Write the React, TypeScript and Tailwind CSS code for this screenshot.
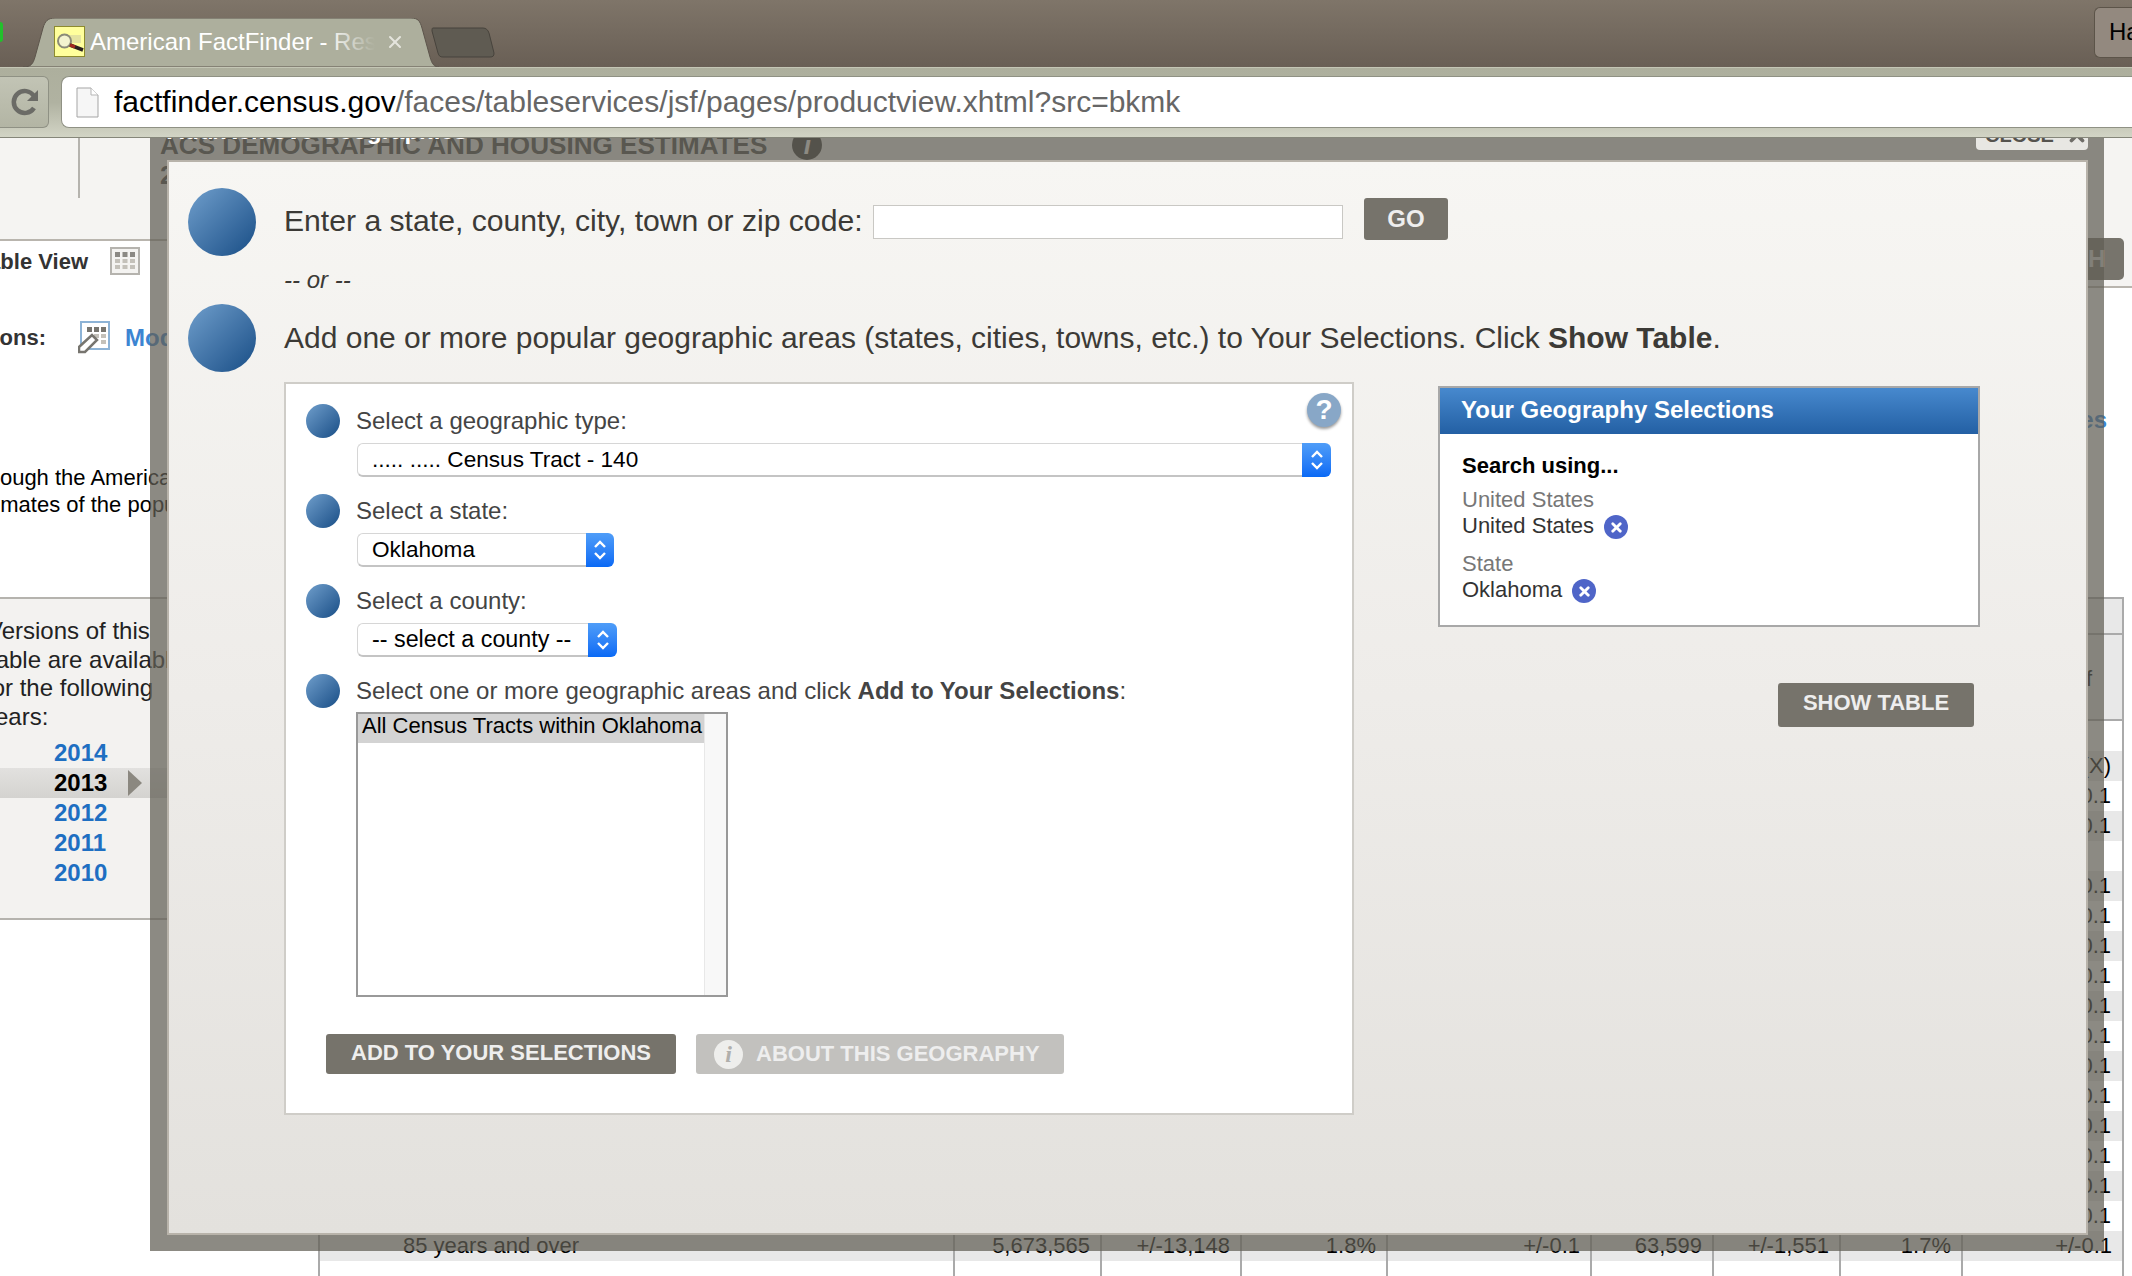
import React from "react";
import { X } from "lucide-react";

const cols = "grid grid-cols-[636px_147px_140px_146px_204px_122px_127px_122px_1fr]";

const rows = [
  { last: "", gray: false },
  { last: "(X)", gray: true },
  { last: "+/-0.1", gray: false },
  { last: "+/-0.1", gray: true },
  { last: "", gray: false },
  ...Array.from({ length: 12 }, (_, i) => ({ last: "+/-0.1", gray: i % 2 === 0 })),
];

const lastRow = ["5,673,565", "+/-13,148", "1.8%", "+/-0.1", "63,599", "+/-1,551", "1.7%", "+/-0.1"];

const Ball = ({ big }: { big?: boolean }) => (
  <div
    className={`shrink-0 rounded-full bg-linear-to-br from-[#709fcc] to-[#174e86] ${
      big ? "w-[68px] h-[68px]" : "w-[34px] h-[34px]"
    }`}
  ></div>
);

const Chevrons = () => (
  <svg width="14" height="24" viewBox="0 0 14 24" fill="none" stroke="#fff" strokeWidth="2.4">
    <path d="M2 9l5-5 5 5" />
    <path d="M2 15l5 5 5-5" />
  </svg>
);

const Select = ({ text, width, arrow, size }: { text: string; width: string; arrow: string; size: string }) => (
  <div className={`ml-px flex h-[34px] ${width}`}>
    <div
      className={`flex-1 flex items-center pl-[14px] bg-white border border-[#d6d6d6] border-b-2 border-b-[#c4c4c4] border-r-0 rounded-l-[6px] text-black whitespace-nowrap ${size}`}
    >
      {text}
    </div>
    <div className={`${arrow} flex items-center justify-center rounded-r-[6px] bg-linear-to-b from-[#4f9df8] to-[#0869f5]`}>
      <Chevrons />
    </div>
  </div>
);

const Remove = () => (
  <span className="ml-[10px] mt-[2px] w-[24px] h-[24px] rounded-full bg-[#4f65c8] flex items-center justify-center">
    <X size={15} color="#fff" strokeWidth={4.5} />
  </span>
);

const GridIcon = () => (
  <svg width="30" height="28" viewBox="0 0 30 28">
    <rect x="1" y="1" width="28" height="26" fill="#f4f3f1" stroke="#b5b3ae" strokeWidth="2" />
    <path d="M5 5h5v5H5zM12.500 5h5v5h-5zM20 5h5v5h-5z" fill="#8b8984" />
    <path d="M5 12h5v4H5zM12.500 12h5v4h-5zM20 12h5v4h-5zM5 18h5v4H5zM12.500 18h5v4h-5zM20 18h5v4h-5z" fill="#c4c1ba" />
  </svg>
);

const ModifyIcon = () => (
  <svg width="32" height="33" viewBox="0 0 32 33">
    <rect x="3" y="1" width="28" height="27" fill="#fff" stroke="#8db3d6" strokeWidth="2" />
    <path d="M9 6h5v5H9zM16 6h5v5h-5zM23 6h5v5h-5z" fill="#77756f" />
    <path d="M23 13h5v4h-5zM23 19h5v4h-5zM16 13h5v4h-5z" fill="#c4c1ba" />
    <path d="M1 26l13-12 5 5-12 12H1z" fill="#fff" stroke="#77756f" strokeWidth="2.500" />
  </svg>
);

export default function App() {
  return (
    <div className="w-[2132px] h-[1276px] overflow-hidden bg-white font-['Liberation_Sans',Arial,sans-serif]">
      {/* browser chrome */}
      <div className="h-[67px] flex bg-linear-to-b from-[#7f7569] to-[#695f55] overflow-hidden">
        <div className="w-[3px] h-[20px] mt-[22px] rounded-r-full bg-[#22c02c]"></div>
        <div className="relative w-[416px] h-[49px] mt-[18px] ml-[20px] flex items-start">
          <svg className="absolute inset-0" width="416" height="49" viewBox="0 0 416 49">
            <path
              d="M0 49c8 0 10-3 12-10L20 10C22 3 25 0 32 0h356c7 0 9 3 11 10l8 29c2 7 4 10 9 10z"
              fill="#adaf9d"
              stroke="#5d554c"
            />
          </svg>
          <div className="relative mt-[8px] ml-[31px] w-[31px] h-[31px] bg-[#ffff9c] border border-[#8d8b2e] shrink-0">
            <svg width="29" height="29" viewBox="0 0 29 29">
              <path d="M10 8h16v8H10z" fill="#e4e3a0" />
              <circle cx="9.500" cy="14" r="6.500" fill="#f3f3cf" stroke="#8b8b78" strokeWidth="2" />
              <path d="M15 18l13 5" stroke="#2b2120" strokeWidth="3.500" />
              <path d="M15 18l5 2" stroke="#a3281d" strokeWidth="3.500" />
            </svg>
          </div>
          <div className="relative mt-[10px] ml-[5px] w-[285px] overflow-hidden whitespace-nowrap text-[24px] leading-[28px] text-white">
            American FactFinder - Results
            <div className="absolute right-0 top-0 h-full w-[50px] bg-linear-to-r from-transparent to-[#adaf9d]"></div>
          </div>
          <X className="relative mt-[14px] ml-[10px]" size={20} color="#e4e4dc" strokeWidth={2.5} />
        </div>
        <svg className="mt-[27px] -ml-[8px]" width="64" height="31" viewBox="0 0 64 31">
          <path d="M2 1h50c3 0 5 2 6 5l5 20c0 3-1 4-4 4H12c-3 0-4-1-5-4L1 4c0-2 0-3 1-3z" fill="#5f5b52" stroke="#47433c" />
        </svg>
        <div className="ml-auto w-[38px] h-[51px] mt-[7px] pl-[14px] bg-[#93897f] border border-[#5c5449] border-r-0 rounded-l-[6px] text-[24px] leading-[48px] text-black overflow-hidden">
          Hans
        </div>
      </div>
      <div className="h-[71px] flex pt-[8px] border-b border-[#85867a] bg-linear-to-b from-[#adaf9d] via-[#b0b2a1] to-[#d2d4c5] border-t border-t-[#c4c6b5]">
        <div className="w-[49px] h-[52px] flex items-center justify-center pl-[1px] bg-linear-to-b from-[#c2c4b5] to-[#b3b5a4] border border-[#8f9184] border-l-0 rounded-r-[6px]">
          <svg width="30" height="30" viewBox="0 0 30 30" fill="none">
            <path d="M24 21a11 11 0 1 1 0-12" stroke="#6b6b66" strokeWidth="4.500" />
            <path d="M28 3v11H17z" fill="#6b6b66" />
          </svg>
        </div>
        <div className="flex-1 h-[52px] ml-[12px] flex items-center bg-white border border-[#8f9184] border-r-0 rounded-l-[8px]">
          <svg className="ml-[14px]" width="23" height="31" viewBox="0 0 23 31">
            <path d="M1 1h14l7 7v22H1z" fill="#f6f6f6" stroke="#a5a5a5" />
            <path d="M15 1v7h7" fill="#fff" stroke="#b5b5b5" />
          </svg>
          <div className="ml-[15px] -mt-[2px] text-[30px] whitespace-nowrap text-[#666]">
            <span className="text-black">factfinder.census.gov</span>/faces/tableservices/jsf/pages/productview.xhtml?src=bkmk
          </div>
        </div>
      </div>

      {/* the page behind the dialog */}
      <div className="relative h-[1138px] overflow-hidden flex">
        <div className="w-[319px] shrink-0">
          <div className="h-[103px] flex bg-[#f5f4f2] border-b-2 border-[#b9b5ae]">
            <div className="ml-[78px] w-[2px] h-[60px] bg-[#b5b3ae] shrink-0"></div>
            <div className="relative ml-[80px] -mt-[8px] text-[26.100px] leading-[30px] font-bold text-[#444] whitespace-nowrap">
              <div className="flex items-center">
                ACS DEMOGRAPHIC AND HOUSING ESTIMATES
                <span className="ml-[25px] w-[30px] h-[30px] rounded-full bg-[#333] text-white italic text-center">i</span>
              </div>
              <div>2013 ACS 1-year estimates</div>
            </div>
          </div>
          <div className="h-[356px] pt-[6px] text-[22px] text-[#333]">
            <div className="flex items-center h-[28px] font-bold whitespace-nowrap">
              <div className="w-[88px] flex justify-end">Table View</div>
              <div className="ml-[22px]"><GridIcon /></div>
            </div>
            <div className="flex items-center mt-[46px] h-[33px] font-bold whitespace-nowrap">
              <div className="w-[46px] flex justify-end">Table Actions:</div>
              <div className="ml-[32px]"><ModifyIcon /></div>
              <span className="ml-[15px] text-[24px] text-[#3c85d2]">Modify Table</span>
            </div>
            <div className="mt-[110px] text-[22px] leading-[27px] text-black whitespace-nowrap">
              <div className="-ml-[38px]">Although the American Community Survey</div>
              <div className="-ml-[34px]">estimates of the population</div>
            </div>
          </div>
          <div className="h-[323px] bg-[#f3f2f0] border-y-2 border-[#b5b3ae] pt-[18px] overflow-hidden">
            <div className="text-[24px] leading-[28.500px] text-[#222] whitespace-nowrap">
              <div className="-ml-[13px]">Versions of this</div>
              <div className="-ml-[11px]">table are available</div>
              <div className="-ml-[15px]">for the following</div>
              <div className="-ml-[17px]">years:</div>
            </div>
            <div className="mt-[7px] text-[24px] leading-[30px] font-bold text-[#1e6fc2]">
              <div className="pl-[54px]">2014</div>
              <div className="pl-[54px] flex items-center bg-linear-to-b from-[#e2e1df] to-[#d4d3d0] text-black">
                2013
                <span className="ml-[21px] w-0 h-0 border-y-[13px] border-y-transparent border-l-[14px] border-l-[#8b8880]"></span>
              </div>
              <div className="pl-[54px]">2012</div>
              <div className="pl-[54px]">2011</div>
              <div className="pl-[54px]">2010</div>
            </div>
          </div>
        </div>

        <div className="flex-1">
          <div className="h-[150px] pt-[100px] bg-[#f5f4f2] border-b-2 border-[#b9b5ae]">
            <div className="ml-auto mr-[8px] w-[120px] h-[42px] pr-[25px] rounded-[5px] bg-[#77746c] text-right text-[24px] leading-[42px] font-bold text-[#d8d8d8]">
              SEARCH
            </div>
          </div>
          <div className="mt-[118px] h-[28px] pr-[25px] text-right text-[24px] leading-[28px] font-bold text-[#3c85d2]">
            Geographies
          </div>
          <div className="mt-[163px] mr-[8px] border-t-2 border-r-2 border-[#aaa] text-[22px] text-black">
            <div className="h-[36px] bg-[#e8e8e8] border-b-2 border-[#aaa]"></div>
            <div className="h-[86px] bg-[#e8e8e8] border-b-2 border-[#aaa] pr-[30px] pt-[29px] text-right leading-[30px]">
              Margin of
            </div>
            {rows.map((row, i) => (
              <div key={i} className={`h-[30px] ${cols} ${row.gray ? "bg-[#e8e8e8]" : ""}`}>
                <div className="col-start-9 pr-[11px] text-right leading-[30px] whitespace-nowrap">{row.last}</div>
              </div>
            ))}
            <div className={`h-[30px] ${cols} bg-[#e8e8e8] leading-[30px]`}>
              <div className="pl-[83px] border-x-2 border-[#aaa] -ml-[1px]">85 years and over</div>
              {lastRow.map((val, i) => (
                <div key={i} className="pr-[10px] text-right border-r-2 border-[#aaa] last:border-r-0 whitespace-nowrap">
                  {val}
                </div>
              ))}
            </div>
            <div className={`h-[30px] ${cols}`}>
              <div className="border-x-2 border-[#aaa] -ml-[1px]"></div>
              {lastRow.map((val, i) => (
                <div key={i} className="border-r-2 border-[#aaa] last:border-r-0"></div>
              ))}
            </div>
          </div>
        </div>

        {/* dialog */}
        <div className="absolute left-[150px] -top-[18px] w-[1954px] h-[1131px] flex flex-col pl-[17px] pr-[16px] pb-[16px] bg-[#625e55]/73">
          <div className="h-[40px] shrink-0 flex justify-between">
            <div className="-mt-[4px] text-[24px] leading-[30px] font-bold text-white">Add/Remove Geographies</div>
            <div className="w-[112px] h-[30px] pl-[9px] flex items-center rounded-b-[4px] bg-[#e8e7e3] text-[20px] font-bold text-[#55534e]">
              CLOSE
              <X className="ml-[12px]" size={22} color="#6f6d68" strokeWidth={4} />
            </div>
          </div>
          <div className="flex-1 flex flex-col pl-[19px] pt-[26px] border-2 border-[#b8b3aa] bg-linear-to-b from-[#f7f6f3] via-[#eeece9] to-[#e3e1dd] text-[#3c3a36]">
            <div className="h-[68px] flex items-center">
              <Ball big />
              <div className="ml-[28px] -mt-[2px] w-[578px] text-[30.150px] whitespace-nowrap">Enter a state, county, city, town or zip code:</div>
              <div className="ml-[11px] w-[470px] h-[34px] bg-white border border-[#c9c8c4]"></div>
              <div className="ml-[21px] -mt-[6px] w-[84px] h-[42px] rounded-[3px] bg-[#76736b] text-center text-[24px] leading-[42px] font-bold text-[#eee]">
                GO
              </div>
            </div>
            <div className="h-[48px] ml-[96px] flex items-center text-[24px] italic">-- or --</div>
            <div className="h-[68px] flex items-center">
              <Ball big />
              <div className="ml-[28px] -mt-[2px] text-[30px] whitespace-nowrap">
                Add one or more popular geographic areas (states, cities, towns, etc.) to Your Selections. Click{" "}
                <b>Show Table</b>.
              </div>
            </div>

            <div className="mt-[10px] flex items-start">
              <div className="relative ml-[96px] w-[1070px] h-[733px] pl-[20px] pt-[20px] bg-white border-2 border-[#cfcdc8]">
                <div className="absolute right-[11px] top-[9px] w-[34px] h-[34px] rounded-full bg-[#88a7c7] shadow-[0_2px_3px_#9a9a9a] text-center text-[28px] leading-[34px] font-bold text-white">
                  ?
                </div>
                <div className="flex flex-col gap-[17px] text-[24px] text-[#444]">
                  <div className="flex gap-[16px]">
                    <Ball />
                    <div>
                      <div className="h-[34px] leading-[34px]">Select a geographic type:</div>
                      <div className="mt-[5px]">
                        <Select text="..... ..... Census Tract - 140" width="w-[974px]" arrow="w-[29px]" size="text-[22.600px]" />
                      </div>
                    </div>
                  </div>
                  <div className="flex gap-[16px]">
                    <Ball />
                    <div>
                      <div className="h-[34px] leading-[34px]">Select a state:</div>
                      <div className="mt-[5px]">
                        <Select text="Oklahoma" width="w-[257px]" arrow="w-[28px]" size="text-[22.600px]" />
                      </div>
                    </div>
                  </div>
                  <div className="flex gap-[16px]">
                    <Ball />
                    <div>
                      <div className="h-[34px] leading-[34px]">Select a county:</div>
                      <div className="mt-[5px]">
                        <Select text="-- select a county --" width="w-[260px]" arrow="w-[29px]" size="text-[23.300px]" />
                      </div>
                    </div>
                  </div>
                  <div className="flex gap-[16px]">
                    <Ball />
                    <div>
                      <div className="h-[34px] leading-[34px] whitespace-nowrap">
                        Select one or more geographic areas and click <b>Add to Your Selections</b>:
                      </div>
                      <div className="mt-[4px] w-[372px] h-[285px] flex bg-white border-2 border-[#999]">
                        <div className="w-[346px] h-[29px] pl-[4px] bg-[#d3d3d3] text-[22px] leading-[24px] text-black whitespace-nowrap">
                          All Census Tracts within Oklahoma
                        </div>
                        <div className="flex-1 bg-[#f8f8f8] border-l border-[#e8e8e8]"></div>
                      </div>
                    </div>
                  </div>
                </div>
                <div className="mt-[37px] ml-[20px] flex gap-[20px] text-[22px] font-bold text-[#eee]">
                  <div className="w-[350px] h-[40px] rounded-[3px] bg-[#76736b] text-center leading-[38px]">
                    ADD TO YOUR SELECTIONS
                  </div>
                  <div className="w-[368px] h-[40px] flex items-center pl-[18px] rounded-[3px] bg-[#c2c1be]">
                    <span className="w-[29px] h-[29px] rounded-full bg-[#eeeeec] text-center font-['Liberation_Serif',serif] italic text-[24px] leading-[29px] text-[#b0afac]">
                      i
                    </span>
                    <span className="ml-[13px] -mt-[2px] whitespace-nowrap">ABOUT THIS GEOGRAPHY</span>
                  </div>
                </div>
              </div>

              <div className="ml-[84px] mt-[4px] w-[542px]">
                <div className="h-[241px] bg-white border-2 border-[#a8a8a8] text-[22px] leading-[26px] text-[#333]">
                  <div className="h-[46px] pl-[21px] bg-linear-to-b from-[#4789ce] to-[#2360a4] text-[24px] leading-[44px] font-bold text-white">
                    Your Geography Selections
                  </div>
                  <div className="pl-[22px] pt-[19px]">
                    <div className="font-bold text-black">Search using...</div>
                    <div className="mt-[8px] text-[#777]">United States</div>
                    <div className="flex items-center">
                      United States
                      <Remove />
                    </div>
                    <div className="mt-[12px] text-[#777]">State</div>
                    <div className="flex items-center">
                      Oklahoma
                      <Remove />
                    </div>
                  </div>
                </div>
                <div className="mt-[56px] ml-auto mr-[6px] w-[196px] h-[44px] rounded-[3px] bg-[#76736b] text-center text-[22px] leading-[40px] font-bold text-[#eee]">
                  SHOW TABLE
                </div>
              </div>
            </div>
          </div>
        </div>
      </div>
    </div>
  );
}
